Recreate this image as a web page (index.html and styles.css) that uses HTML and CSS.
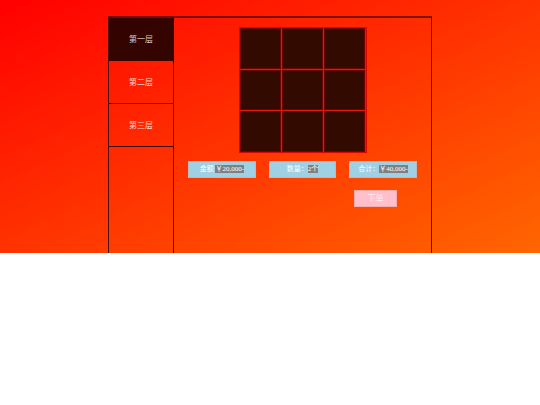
FILE: index.html
```html
<!DOCTYPE html>
<html lang="zh-CN">
<head>
<meta charset="UTF-8">
<meta name="viewport" content="width=device-width, initial-scale=1.0">
<title>下单</title>
<link rel="stylesheet" href="styles.css">
</head>
<body>

<div class="page">
    <div class="container">
        <!-- Floor tabs -->
        <nav class="floors">
            <button type="button" class="floor active">第一层</button>
            <button type="button" class="floor">第二层</button>
            <button type="button" class="floor">第三层</button>
        </nav>

        <main class="content">
            <!-- 3 x 3 goods grid -->
            <div class="goods">
                <div class="cell"></div>
                <div class="cell"></div>
                <div class="cell"></div>
                <div class="cell"></div>
                <div class="cell"></div>
                <div class="cell"></div>
                <div class="cell"></div>
                <div class="cell"></div>
                <div class="cell"></div>
            </div>

            <div class="totals">
                <div class="total">金额 <span class="value">￥20,000-</span></div>
                <div class="total">数量：<span class="value">2个</span></div>
                <div class="total">合计：<span class="value">￥40,000-</span></div>
            </div>

            <button type="button" class="order">下单</button>
        </main>
    </div>
</div>

</body>
</html>
```

FILE: styles.css
```css
* {
    box-sizing: border-box;
}

body {
    margin: 0;
    font-family: "Liberation Serif", "Noto Sans CJK SC", serif;
    background-color: #fff;
}

button {
    margin: 0;
    padding: 0;
    font: inherit;
    cursor: pointer;
}

.page {
    display: flex;
    justify-content: center;
    min-height: 253px;
    padding-top: 16px;
    background-image: linear-gradient(to bottom right, #ff0000, #ff6600);
}

.container {
    display: flex;
    width: 60%;
    border: 1px solid rgba(0, 0, 0, 0.7);
    border-top: 2px solid rgba(0, 0, 0, 0.5);
    border-bottom: none;
}

/* Left column */
.floors {
    display: flex;
    flex-direction: column;
    width: 65px;
    border-right: 1px solid #2a0600;
}

.floor {
    height: 43px;
    padding-bottom: 2px;
    border: none;
    border-bottom: 1px solid #3c0600;
    background-color: transparent;
    color: rgba(255, 255, 255, 0.8);
    font-size: 8px;
}

.floor.active {
    background-color: rgba(0, 0, 0, 0.8);
}

/* Right column */
.content {
    flex: 1;
    padding: 9px 14px;
}

.goods {
    display: grid;
    grid-template-columns: repeat(3, 1fr);
    grid-template-rows: repeat(3, 1fr);
    gap: 1px;
    width: 128px;
    height: 126px;
    margin: 0 auto;
    border: 1px solid #d80800;
    background-color: #e01810;
}

.cell {
    border: 1px solid #700400;
    background-color: #330a00;
}

.totals {
    display: grid;
    grid-template-columns: repeat(3, 1fr);
    gap: 13px;
    margin-top: 8px;
}

.total {
    border: 1px solid #b4bcc0;
    background-color: #9fd0e4;
    color: #fff;
    font-size: 7px;
    line-height: 15px;
    text-align: center;
    white-space: nowrap;
}

.value {
    background-color: #808080;
}

.order {
    display: block;
    width: 43px;
    height: 17px;
    margin: 12px 20px 0 auto;
    border: 1px solid #f4aeb0;
    background-color: #ffc0cb;
    color: #fff;
    font-size: 8px;
    font-weight: 300;
    line-height: 15px;
}
```
